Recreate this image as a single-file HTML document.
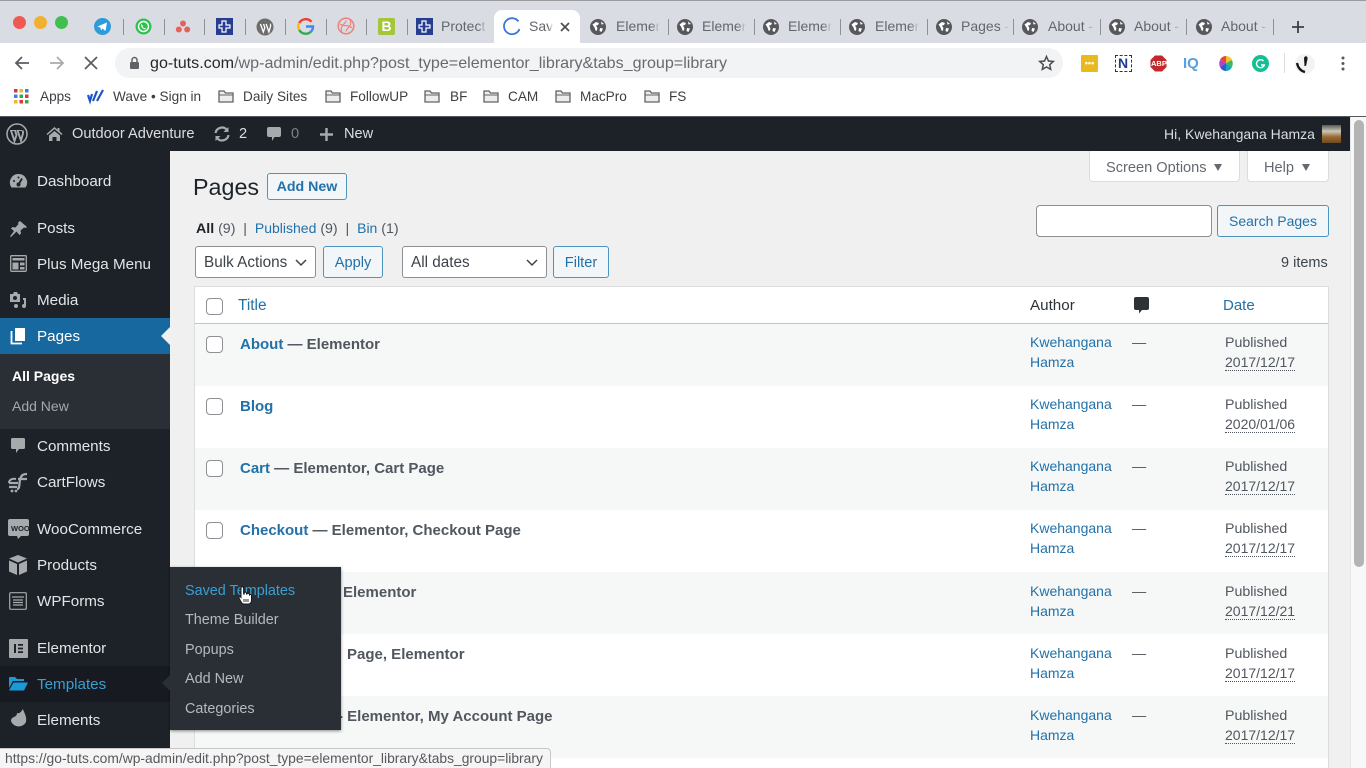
<!DOCTYPE html>
<html><head><meta charset="utf-8"><title>Pages</title>
<style>
*{box-sizing:border-box}
html,body{margin:0;padding:0;width:1366px;height:768px;overflow:hidden;background:#f0f0f1}
body{font-family:"Liberation Sans",sans-serif;position:relative}
#w{position:absolute;left:0;top:0;width:1366px;height:768px;overflow:hidden;filter:blur(.35px)}
.b{position:absolute}
.t{position:absolute;white-space:nowrap;line-height:24px;font-size:14.2px}
svg{position:absolute;overflow:visible}
.tab{color:#63676c;font-size:14px;line-height:20px;overflow:hidden;-webkit-mask-image:linear-gradient(90deg,#000 80%,transparent);mask-image:linear-gradient(90deg,#000 80%,transparent)}
.sep{position:absolute;top:19px;width:1px;height:16px;background:#8d9096}
.bm{color:#3c4043;font-size:13.6px;line-height:20px}
.ab{color:#dcdde0;font-size:14.6px;line-height:20px}
.m{color:#e2e4e6;font-size:15.2px}
.l{color:#2271a8;font-size:14px}
.t.l{margin-top:-1px}
.cb{position:absolute;left:206px;width:17px;height:17px;border:1px solid #8c8f94;border-radius:4px;background:#fff}
.t.h{color:#50575e;font-weight:bold;font-size:15px;line-height:26px}
.h a,.l2{color:#2271a8}
.g{color:#50575e}
.t.d{color:#50575e;border-bottom:1px dotted #50575e;line-height:15px;height:16px;margin-top:4px;font-size:14px}
.btn{position:absolute;border:1px solid #4f94bd;border-radius:3px;background:#f2f6f9;color:#2271a8;text-align:center;font-size:14.6px}
.sel{position:absolute;border:1px solid #8c8f94;border-radius:3px;background:#fff;color:#3c434a;font-size:15.3px;line-height:32px;padding-left:8px}
.fo{color:#b4b9be;font-size:14.4px}
</style></head><body><div id="w">

<!-- chrome -->
<div class="b" style="left:0;top:0;width:1366px;height:43px;background:#dadce3"></div>
<div class="b" style="left:0;top:43px;width:1366px;height:74px;background:#fff"></div>
<div class="b" style="left:0;top:0;width:1366px;height:1px;background:#9a9a9f"></div>
<div class="b" style="left:13px;top:16px;width:13px;height:13px;border-radius:50%;background:#ee5a52"></div>
<div class="b" style="left:34px;top:16px;width:13px;height:13px;border-radius:50%;background:#f1b030"></div>
<div class="b" style="left:55px;top:16px;width:13px;height:13px;border-radius:50%;background:#3fc04e"></div>

<svg style="left:94px;top:18px" width="17" height="17" viewBox="0 0 17 17"><circle cx="8.5" cy="8.5" r="8.5" fill="#2d9cdb"/><path d="M3.5 8.5 13 4.5 11.5 13 8.5 10.5 7 12.5 6.5 9.8z" fill="#fff"/></svg>
<svg style="left:135px;top:18px" width="17" height="17" viewBox="0 0 17 17"><circle cx="8.5" cy="8.5" r="8" fill="#2fc24f"/><circle cx="8.5" cy="8.5" r="5" fill="none" stroke="#fff" stroke-width="1.4"/><path d="M6.3 5.8 8 8l-.4 1 1.5 1.2 1-.3 1 1.1c-2 1.4-5.8-1.6-4.8-5.2z" fill="#fff"/></svg>
<svg style="left:175px;top:19px" width="16" height="15" viewBox="0 0 16 15"><circle cx="8" cy="4.5" r="3" fill="#e8605a"/><circle cx="3.8" cy="10.5" r="3" fill="#e8605a"/><circle cx="12.2" cy="10.5" r="3" fill="#e8605a"/></svg>
<div class="b" style="left:216px;top:18px;width:17px;height:17px;background:#263d91"></div>
<svg style="left:216px;top:18px" width="17" height="17" viewBox="0 0 17 17"><path d="M6 3h4v4h4v3h-4v4H6v-4H3V7h3z" fill="none" stroke="#fff" stroke-width="1.2"/></svg>
<svg style="left:256px;top:18px" width="18" height="18" viewBox="0 0 18 18"><circle cx="9" cy="9" r="8.5" fill="#6d6d6d"/><path d="M4.5 6 7.3 14l1.5-4.4L7.6 6m2.6 0 2.7 8 1.6-5.5c.4-1.5-.3-2.5-.5-2.5" fill="none" stroke="#fff" stroke-width="1.3"/></svg>
<svg style="left:297px;top:18px" width="17" height="17" viewBox="0 0 17 17"><path d="M14.5 3.8A7.5 7.5 0 0 0 2.2 5" fill="none" stroke="#ea4335" stroke-width="2.4"/><path d="M2.2 5a7.5 7.5 0 0 0 0 7" fill="none" stroke="#fbbc05" stroke-width="2.4"/><path d="M2.2 12a7.5 7.5 0 0 0 11.6 1.7" fill="none" stroke="#34a853" stroke-width="2.4"/><path d="M13.8 13.7A7 7 0 0 0 16 8.5H9" fill="none" stroke="#4285f4" stroke-width="2.4"/></svg>
<svg style="left:337px;top:17px" width="18" height="18" viewBox="0 0 18 18" fill="none" stroke="#ef7f79" stroke-width="1.5"><circle cx="9" cy="9" r="7.8"/><path d="M5 14.500C2 9 9 7 9 3.500M13 3.500C16 9 9 11 9 14.500M3 7c4 3 8 0 12 4" stroke-width="1.100"/></svg>
<div class="b" style="left:378px;top:18px;width:17px;height:17px;background:#a4c739;border-radius:2px;color:#fff;font:bold 14px/17px 'Liberation Sans',sans-serif;text-align:center">B</div>
<div class="b" style="left:416px;top:18px;width:17px;height:17px;background:#263d91"></div>
<svg style="left:416px;top:18px" width="17" height="17" viewBox="0 0 17 17"><path d="M6 3h4v4h4v3h-4v4H6v-4H3V7h3z" fill="none" stroke="#fff" stroke-width="1.2"/></svg>
<div class="sep" style="left:123px"></div><div class="sep" style="left:164px"></div><div class="sep" style="left:204px"></div><div class="sep" style="left:245px"></div><div class="sep" style="left:285px"></div><div class="sep" style="left:326px"></div><div class="sep" style="left:366px"></div><div class="sep" style="left:407px"></div>
<div class="t tab" style="left:441px;top:16px;width:46px">Protect</div>

<div class="b" style="left:494px;top:10px;width:86px;height:34px;background:#fff;border-radius:8px 8px 0 0"></div>
<svg style="left:503px;top:18px" width="18" height="18" viewBox="0 0 18 18"><path d="M15.5 3.5A8 8 0 1 0 16.5 11" fill="none" stroke="#3b78d8" stroke-width="1.8"/></svg>
<div class="t tab" style="left:529px;top:16px;width:24px">Sav</div>
<svg style="left:560px;top:22px" width="10" height="10" viewBox="0 0 10 10"><path d="M1 1 9 9M9 1 1 9" stroke="#4b4e52" stroke-width="1.7"/></svg>

<svg width="0" height="0"><defs><g id="gl"><circle cx="8" cy="8" r="8" fill="#56585c"/><path d="M2.5 5.5 6 3l3 1-1 2-2 .5 1.5 3-1 2.5-1-.5-1-3zM10 9l3 .5L11.5 13 9.500 12z M11 2.500 14 5l-2.500.5z" fill="#fff"/></g></defs></svg>
<svg style="left:590px;top:19px" width="16" height="16"><use href="#gl"/></svg><div class="t tab" style="left:616px;top:16px;width:44px">Elemen</div><div class="sep" style="left:668px"></div>
<svg style="left:677px;top:19px" width="16" height="16"><use href="#gl"/></svg><div class="t tab" style="left:702px;top:16px;width:44px">Elemen</div><div class="sep" style="left:754px"></div>
<svg style="left:763px;top:19px" width="16" height="16"><use href="#gl"/></svg><div class="t tab" style="left:788px;top:16px;width:44px">Elemen</div><div class="sep" style="left:840px"></div>
<svg style="left:849px;top:19px" width="16" height="16"><use href="#gl"/></svg><div class="t tab" style="left:875px;top:16px;width:44px">Elemen</div><div class="sep" style="left:927px"></div>
<svg style="left:936px;top:19px" width="16" height="16"><use href="#gl"/></svg><div class="t tab" style="left:961px;top:16px;width:48px">Pages -</div><div class="sep" style="left:1013px"></div>
<svg style="left:1022px;top:19px" width="16" height="16"><use href="#gl"/></svg><div class="t tab" style="left:1048px;top:16px;width:46px">About -</div><div class="sep" style="left:1100px"></div>
<svg style="left:1109px;top:19px" width="16" height="16"><use href="#gl"/></svg><div class="t tab" style="left:1134px;top:16px;width:46px">About -</div><div class="sep" style="left:1186px"></div>
<svg style="left:1196px;top:19px" width="16" height="16"><use href="#gl"/></svg><div class="t tab" style="left:1221px;top:16px;width:46px">About -</div><div class="sep" style="left:1273px"></div>
<svg style="left:1291px;top:20px" width="14" height="14" viewBox="0 0 14 14"><path d="M7 1v12M1 7h12" stroke="#3c4043" stroke-width="1.8"/></svg>

<svg style="left:14px;top:55px" width="16" height="16" viewBox="0 0 16 16"><path d="M15 8H2M8 2 2 8l6 6" fill="none" stroke="#5a5e63" stroke-width="1.8"/></svg>
<svg style="left:49px;top:55px" width="16" height="16" viewBox="0 0 16 16"><path d="M1 8h13M8 2l6 6-6 6" fill="none" stroke="#a8abaf" stroke-width="1.8"/></svg>
<svg style="left:84px;top:56px" width="14" height="14" viewBox="0 0 14 14"><path d="M1 1 13 13M13 1 1 13" stroke="#5a5e63" stroke-width="1.8"/></svg>
<div class="b" style="left:115px;top:48px;width:948px;height:30px;border-radius:15px;background:#f1f3f4"></div>
<svg style="left:129px;top:56px" width="11" height="14" viewBox="0 0 11 14"><path d="M3 6V4a2.500 2.500 0 0 1 5 0v2" fill="none" stroke="#5f6368" stroke-width="1.500"/><rect x="1" y="6" width="9" height="7" rx="1" fill="#5f6368"/></svg>
<div class="t" style="left:150px;top:51px;font-size:16.1px;color:#676b70"><span style="color:#26282b">go-tuts.com</span>/wp-admin/edit.php?post_type=elementor_library&amp;tabs_group=library</div>
<svg style="left:1038px;top:55px" width="17" height="16" viewBox="0 0 17 16"><path d="M8.500 1.500 10.500 6l4.800.5-3.600 3.200 1 4.700-4.200-2.400-4.200 2.400 1-4.700L1.700 6.500 6.500 6z" fill="none" stroke="#4a4d51" stroke-width="1.500"/></svg>

<div class="b" style="left:1081px;top:55px;width:17px;height:17px;background:#eab81f;border-radius:1px;color:#fff;font:bold 9px/17px 'Liberation Sans',sans-serif;text-align:center">•••</div>
<div class="b" style="left:1115px;top:55px;width:17px;height:17px;border:1px dashed #30343a"></div>
<div class="t" style="left:1118px;top:53px;font-weight:bold;color:#1d3c8f;font-size:14px;line-height:20px">N</div>
<svg style="left:1150px;top:55px" width="17" height="17" viewBox="0 0 17 17"><path d="M5 0.500h7L16.500 5v7L12 16.500H5L.5 12V5z" fill="#c3282d"/></svg>
<div class="t" style="left:1151px;top:54px;color:#fff;font:bold 7.500px/19px 'Liberation Sans',sans-serif;width:15px;text-align:center">ABP</div>
<div class="t" style="left:1183px;top:52px;color:#5aa0dc;font-weight:bold;font-size:15px">IQ</div>
<svg style="left:1218px;top:55px" width="16" height="17" viewBox="0 0 16 17"><path d="M8 1 8 8 2 5Q4 1 8 1z" fill="#e94335"/><path d="M8 1Q12 1 14 5L8 8z" fill="#f6c030"/><path d="M14 5Q15.500 8.500 14 12L8 8z" fill="#3fb950"/><path d="M14 12Q12 16 8 16L8 8z" fill="#19a7b3"/><path d="M8 16Q4 16 2 12L8 8z" fill="#3558d0"/><path d="M2 12Q.5 8.500 2 5L8 8z" fill="#b13fcf"/></svg>
<svg style="left:1252px;top:55px" width="17" height="17" viewBox="0 0 17 17"><circle cx="8.500" cy="8.500" r="8.500" fill="#15bf92"/><path d="M11.500 6A4 4 0 1 0 12.300 10H9" fill="none" stroke="#fff" stroke-width="1.400"/></svg>
<div class="b" style="left:1284px;top:53px;width:1px;height:20px;background:#dadce0"></div>
<svg style="left:1295px;top:53px" width="20" height="22" viewBox="0 0 20 22"><circle cx="10" cy="11" r="10" fill="#f3f3f3"/><path d="M2 10C3 15 6 18 10 19" fill="none" stroke="#17181a" stroke-width="2.300"/><path d="M9 5c1-3 4-2 3.500 1L11 13 9.500 13z" fill="#17181a"/></svg>
<svg style="left:1341px;top:56px" width="4" height="15" viewBox="0 0 4 15" fill="#55585c"><circle cx="2" cy="2" r="1.500"/><circle cx="2" cy="7.500" r="1.500"/><circle cx="2" cy="13" r="1.500"/></svg>

<svg style="left:14px;top:89px" width="15" height="15" viewBox="0 0 15 15"><g fill="#d93a30"><rect x="0" y="0" width="3.500" height="3.500"/></g><rect x="5.500" width="3.500" height="3.500" fill="#f2b530"/><rect x="11" width="3.500" height="3.500" fill="#3d7fe0"/><rect y="5.500" width="3.500" height="3.500" fill="#3d7fe0"/><rect x="5.500" y="5.500" width="3.500" height="3.500" fill="#35a853"/><rect x="11" y="5.500" width="3.500" height="3.500" fill="#d93a30"/><rect y="11" width="3.500" height="3.500" fill="#f2b530"/><rect x="5.500" y="11" width="3.500" height="3.500" fill="#d93a30"/><rect x="11" y="11" width="3.500" height="3.500" fill="#35a853"/></svg>
<div class="t bm" style="left:40px;top:87px">Apps</div>
<svg style="left:87px;top:89px" width="17" height="15" viewBox="0 0 17 15"><path d="M1 6 3 12 5 5M6 12 10 2M10 12 16 1" fill="none" stroke="#1c55c9" stroke-width="2.200"/></svg>
<div class="t bm" style="left:113px;top:87px">Wave • Sign in</div>
<svg width="0" height="0"><defs><g id="fo"><path d="M1 13V2h5l1.500 2H15v9z" fill="#ededed" stroke="#5f6368" stroke-width="1.300"/><path d="M1 6h14" stroke="#5f6368" stroke-width="1"/></g></defs></svg>
<svg style="left:218px;top:89px" width="16" height="14"><use href="#fo"/></svg><div class="t bm" style="left:243px;top:87px">Daily Sites</div>
<svg style="left:325px;top:89px" width="16" height="14"><use href="#fo"/></svg><div class="t bm" style="left:350px;top:87px">FollowUP</div>
<svg style="left:424px;top:89px" width="16" height="14"><use href="#fo"/></svg><div class="t bm" style="left:450px;top:87px">BF</div>
<svg style="left:483px;top:89px" width="16" height="14"><use href="#fo"/></svg><div class="t bm" style="left:508px;top:87px">CAM</div>
<svg style="left:555px;top:89px" width="16" height="14"><use href="#fo"/></svg><div class="t bm" style="left:580px;top:87px">MacPro</div>
<svg style="left:644px;top:89px" width="16" height="14"><use href="#fo"/></svg><div class="t bm" style="left:669px;top:87px">FS</div>

<!-- admin bar -->
<div class="b" style="left:0;top:116px;width:1350px;height:35px;background:#1d2229"></div>
<div class="b" style="left:0;top:116px;width:1366px;height:1px;background:#55585c"></div>
<svg style="left:6px;top:123px" width="22" height="22" viewBox="0 0 22 22"><circle cx="11" cy="11" r="10" fill="none" stroke="#a7aaad" stroke-width="1.500"/><path d="M5 7.500 8.500 18l2-6L9 7.500M11.500 7.500 15 17.500l2-7c.4-1.500-.2-2.500-.5-3" fill="none" stroke="#a7aaad" stroke-width="1.900"/><path d="M4 7.500h6.500M11 7.500h5" stroke="#a7aaad" stroke-width="1"/></svg>
<svg style="left:46px;top:126px" width="17" height="16" viewBox="0 0 17 16"><path d="M8.500 1 .5 8l1 1 7-6 7 6 1-1-3-2.700V2h-2v1.600z" fill="#a7aaad"/><path d="M3 9.500 8.500 5 14 9.500V15h-3.500v-4h-4v4H3z" fill="#a7aaad"/></svg>
<div class="t ab" style="left:72px;top:124px">Outdoor Adventure</div>
<svg style="left:213px;top:126px" width="18" height="16" viewBox="0 0 18 16"><path d="M2.500 7a6.500 6.500 0 0 1 11.500-3M15.500 9A6.500 6.500 0 0 1 4 12" fill="none" stroke="#a7aaad" stroke-width="2.200"/><path d="M15.500 1v5h-5zM2.500 15v-5h5z" fill="#a7aaad"/></svg>
<div class="t ab" style="left:239px;top:124px">2</div>
<svg style="left:266px;top:126px" width="16" height="17" viewBox="0 0 16 17"><path d="M3 1h10a2 2 0 0 1 2 2v6a2 2 0 0 1-2 2H8.500L6 15v-4H3a2 2 0 0 1-2-2V3a2 2 0 0 1 2-2z" fill="#a7aaad"/></svg>
<div class="t ab" style="left:291px;top:124px;color:#7d8186">0</div>
<svg style="left:319px;top:127px" width="15" height="15" viewBox="0 0 15 15"><path d="M7.500 1v13M1 7.500h13" stroke="#a7aaad" stroke-width="2.400"/></svg>
<div class="t ab" style="left:344px;top:124px">New</div>
<div class="t ab" style="left:1164px;top:124px;font-size:14px">Hi, Kwehangana Hamza</div>
<div class="b" style="left:1322px;top:125px;width:19px;height:18px;background:linear-gradient(180deg,#5a5a52 0,#c9c8ba 35%,#9e6b32 65%,#6e4a22 100%)"></div>

<!-- sidebar -->
<div class="b" style="left:0;top:151px;width:170px;height:617px;background:#1d2229"></div>
<div class="b" style="left:0;top:318px;width:170px;height:36px;background:#16689f"></div>
<div class="b" style="left:0;top:354px;width:170px;height:75px;background:#2a2f36"></div>
<div class="b" style="left:161px;top:327px;width:0;height:0;border:9px solid transparent;border-right-color:#f0f0f1;border-left:0"></div>
<div class="b" style="left:0;top:666px;width:170px;height:36px;background:#171b21"></div>

<svg style="left:9px;top:172px" width="19" height="18" viewBox="0 0 19 18"><path d="M9.500 2a8.500 8.500 0 0 0-7 13.500h14A8.500 8.500 0 0 0 9.500 2z" fill="#a7aaad"/><path d="M9.500 12.500 13 6.500" stroke="#1d2229" stroke-width="1.800"/><circle cx="9.500" cy="12.500" r="2" fill="#1d2229"/><circle cx="5" cy="9" r="1" fill="#1d2229"/><circle cx="9.500" cy="5.500" r="1" fill="#1d2229"/></svg>
<div class="t m" style="left:37px;top:170px">Dashboard</div>
<svg style="left:9px;top:220px" width="19" height="18" viewBox="0 0 19 18"><path d="M11 1l7 6-1.500 1-1.500-.5-3.500 3 .5 3-1.500 1.500-3-3.500L2 17l-1-.5 4-5.500-3-2.500L3.500 7l3 .5 3-3.500-.5-1.500z" fill="#a7aaad"/></svg>
<div class="t m" style="left:37px;top:217px">Posts</div>
<svg style="left:10px;top:255px" width="17" height="17" viewBox="0 0 17 17"><rect x=".7" y=".7" width="15.600" height="15.600" rx="1" fill="none" stroke="#a7aaad" stroke-width="1.300"/><path d="M2.500 3h12v2.500h-12zM2.500 7.500h6v7h-6zM10 7.500h4.500v3H10zM10 12h4.500v2.500H10z" fill="#a7aaad"/></svg>
<div class="t m" style="left:37px;top:253px">Plus Mega Menu</div>
<svg style="left:9px;top:291px" width="19" height="19" viewBox="0 0 19 19"><path d="M1 3h3l1-2h3l1 2h2v8H1z" fill="#a7aaad"/><circle cx="6" cy="7" r="2" fill="#1d2229"/><path d="M14 7h3v8a2 2 0 1 1-2-2V9h-1z" fill="#a7aaad"/><circle cx="7" cy="15" r="2" fill="#a7aaad"/></svg>
<div class="t m" style="left:37px;top:289px">Media</div>
<svg style="left:10px;top:327px" width="16" height="18" viewBox="0 0 16 18"><path d="M5 1h10v13H5z" fill="#fff"/><path d="M1.500 4v12.500H12" fill="none" stroke="#fff" stroke-width="1.800"/></svg>
<div class="t m" style="left:37px;top:325px;color:#fff">Pages</div>
<div class="t" style="left:12px;top:364px;color:#fff;font-weight:bold;font-size:14px">All Pages</div>
<div class="t" style="left:12px;top:394px;color:#a4a8ad;font-size:14px">Add New</div>
<svg style="left:10px;top:437px" width="16" height="18" viewBox="0 0 16 18"><path d="M2.500 1h11A1.500 1.500 0 0 1 15 2.500v8a1.500 1.500 0 0 1-1.500 1.500H9l-3 4v-4H2.500A1.500 1.500 0 0 1 1 10.500v-8A1.500 1.500 0 0 1 2.500 1z" fill="#a7aaad"/></svg>
<div class="t m" style="left:37px;top:435px">Comments</div>
<svg style="left:8px;top:472px" width="21" height="21" viewBox="0 0 21 21"><path d="M1 11h9M1 15h8M9 17c3 0 2-5 3-9s2-6 7-6M10 7h9" fill="none" stroke="#a7aaad" stroke-width="2.300"/><path d="M1 11c0-3 3-5 7-4" fill="none" stroke="#a7aaad" stroke-width="2"/><circle cx="4" cy="19" r="1.400" fill="#a7aaad"/><circle cx="8" cy="19" r="1.400" fill="#a7aaad"/></svg>
<div class="t m" style="left:37px;top:471px">CartFlows</div>
<svg style="left:8px;top:519px" width="21" height="21" viewBox="0 0 21 21"><path d="M2 0h17a2 2 0 0 1 2 2v13a2 2 0 0 1-2 2h-6l-3 3-1-3H2a2 2 0 0 1-2-2V2a2 2 0 0 1 2-2z" fill="#a7aaad"/></svg>
<div class="t" style="left:11px;top:517px;color:#1d2229;font-size:7.500px;font-weight:bold">WOO</div>
<div class="t m" style="left:37px;top:518px">WooCommerce</div>
<svg style="left:8px;top:555px" width="20" height="21" viewBox="0 0 20 21"><path d="M10 0 19 3.500 10 7.500 1 3.500zM1 5.500l8 3.500v11l-8-3.500zM19 5.500 11 9v11l8-3.500z" fill="#a7aaad"/></svg>
<div class="t m" style="left:37px;top:554px">Products</div>
<svg style="left:9px;top:592px" width="18" height="18" viewBox="0 0 18 18"><rect x=".7" y=".7" width="16.600" height="16.600" rx="1" fill="none" stroke="#a7aaad" stroke-width="1.200"/><path d="M3 5h12M4 8h10M4 10.500h10M4 13h10" stroke="#a7aaad" stroke-width="1.300"/></svg>
<div class="t m" style="left:37px;top:590px">WPForms</div>
<div class="b" style="left:9px;top:639px;width:19px;height:19px;background:#a7aaad;border-radius:1px"></div>
<svg style="left:9px;top:639px" width="19" height="19" viewBox="0 0 19 19"><path d="M5 5h2v9H5zM9 5h5v1.800H9zM9 8.600h5v1.800H9zM9 12.200h5V14H9z" fill="#1d2229"/></svg>
<div class="t m" style="left:37px;top:637px">Elementor</div>
<svg style="left:9px;top:676px" width="19" height="15" viewBox="0 0 19 15"><path d="M0 2a1 1 0 0 1 1-1h5l2 2h7v2H4L0 12z" fill="#1c9ad6"/><path d="M4.500 6.500H19L15 14.500H0z" fill="#1c9ad6"/></svg>
<div class="t m" style="left:37px;top:673px;color:#3a9fd1">Templates</div>
<svg style="left:10px;top:709px" width="17" height="20" viewBox="0 0 17 20"><path d="M13 0C14 4 17 7 16 13A8 7.500 0 0 1 1 12C1 7 7 9 7 4 9.500 5 11 3 13 0z" fill="#a7aaad"/></svg>
<div class="t m" style="left:37px;top:709px">Elements</div>

<!-- content -->
<div class="b" style="left:1089px;top:151px;width:151px;height:31px;background:#fff;border:1px solid #dcdcde;border-top:0;border-radius:0 0 4px 4px"></div>
<div class="t" style="left:1106px;top:156px;color:#646970;font-size:14.6px">Screen Options</div>
<div class="b" style="left:1214px;top:164px;width:0;height:0;border:4.500px solid transparent;border-top:7px solid #646970;border-bottom:0"></div>
<div class="b" style="left:1247px;top:151px;width:82px;height:31px;background:#fff;border:1px solid #dcdcde;border-top:0;border-radius:0 0 4px 4px"></div>
<div class="t" style="left:1264px;top:156px;color:#646970;font-size:14.6px">Help</div>
<div class="b" style="left:1302px;top:164px;width:0;height:0;border:4.500px solid transparent;border-top:7px solid #646970;border-bottom:0"></div>

<div class="t" style="left:193px;top:173px;font-size:23.300px;line-height:28px;color:#1d2327">Pages</div>
<div class="btn" style="left:267px;top:173px;width:80px;height:27px;line-height:26px;font-weight:bold;font-size:14.200px">Add New</div>
<div class="t" style="left:196px;top:216px;color:#50575e;font-size:14.200px"><b style="color:#1d2327">All</b> (9) &nbsp;| &nbsp;<span class="l">Published</span> (9) &nbsp;| &nbsp;<span class="l">Bin</span> (1)</div>

<div class="sel" style="left:195px;top:246px;width:121px;height:32px">Bulk Actions</div>
<svg style="left:295px;top:259px" width="12" height="8" viewBox="0 0 12 8"><path d="M1 1l5 5 5-5" fill="none" stroke="#3c434a" stroke-width="1.500"/></svg>
<div class="btn" style="left:323px;top:246px;width:60px;height:32px;line-height:33px">Apply</div>
<div class="sel" style="left:402px;top:246px;width:145px;height:32px">All dates</div>
<svg style="left:526px;top:259px" width="12" height="8" viewBox="0 0 12 8"><path d="M1 1l5 5 5-5" fill="none" stroke="#3c434a" stroke-width="1.500"/></svg>
<div class="btn" style="left:553px;top:246px;width:56px;height:32px;line-height:33px">Filter</div>

<div class="b" style="left:1036px;top:205px;width:176px;height:32px;background:#fff;border:1px solid #8c8f94;border-radius:4px"></div>
<div class="btn" style="left:1217px;top:205px;width:112px;height:32px;line-height:31px;font-size:14px">Search Pages</div>
<div class="t" style="left:1281px;top:251px;color:#3c434a;font-size:14.500px">9 items</div>

<!-- table -->
<div class="b" style="left:194px;top:286px;width:1135px;height:482px;background:#fff;border:1px solid #dcdcde;border-bottom:0"></div>
<div class="b" style="left:195px;top:323px;width:1133px;height:1px;background:#c3c4c7"></div>
<div class="b" style="left:195px;top:324px;width:1133px;height:62px;background:#f6f7f7"></div>
<div class="b" style="left:195px;top:448px;width:1133px;height:62px;background:#f6f7f7"></div>
<div class="b" style="left:195px;top:572px;width:1133px;height:62px;background:#f6f7f7"></div>
<div class="b" style="left:195px;top:696px;width:1133px;height:62px;background:#f6f7f7"></div>

<div class="cb" style="top:298px"></div>
<div class="t l" style="left:238px;top:295px;font-size:15.400px">Title</div>
<div class="t" style="left:1030px;top:294px;color:#2c3338;font-size:15.200px">Author</div>
<svg style="left:1134px;top:297px" width="15" height="17" viewBox="0 0 15 17"><path d="M2 0h11a2 2 0 0 1 2 2v9a2 2 0 0 1-2 2H8l-3 3.500V13H2a2 2 0 0 1-2-2V2a2 2 0 0 1 2-2z" fill="#2c3338"/></svg>
<div class="t l" style="left:1223px;top:295px;font-size:15px">Date</div>

<div class="cb" style="top:336px"></div><div class="t h" style="left:240px;top:332px"><a>About</a> — Elementor</div>
<div class="cb" style="top:398px"></div><div class="t h" style="left:240px;top:394px"><a>Blog</a></div>
<div class="cb" style="top:460px"></div><div class="t h" style="left:240px;top:456px"><a>Cart</a> — Elementor, Cart Page</div>
<div class="cb" style="top:522px"></div><div class="t h" style="left:240px;top:518px"><a>Checkout</a> — Elementor, Checkout Page</div>
<div class="t h" style="left:343px;top:580px">Elementor</div>
<div class="t h" style="left:347px;top:642px">Page, Elementor</div>
<div class="t h" style="left:338px;top:704px">- Elementor, My Account Page</div>

<div class="t l" style="left:1030px;top:331px">Kwehangana</div><div class="t l" style="left:1030px;top:351px">Hamza</div><div class="t g" style="left:1132px;top:331px">—</div><div class="t g" style="left:1225px;top:331px">Published</div><div class="t d" style="left:1225px;top:351px">2017/12/17</div>
<div class="t l" style="left:1030px;top:393px">Kwehangana</div><div class="t l" style="left:1030px;top:413px">Hamza</div><div class="t g" style="left:1132px;top:393px">—</div><div class="t g" style="left:1225px;top:393px">Published</div><div class="t d" style="left:1225px;top:413px">2020/01/06</div>
<div class="t l" style="left:1030px;top:455px">Kwehangana</div><div class="t l" style="left:1030px;top:475px">Hamza</div><div class="t g" style="left:1132px;top:455px">—</div><div class="t g" style="left:1225px;top:455px">Published</div><div class="t d" style="left:1225px;top:475px">2017/12/17</div>
<div class="t l" style="left:1030px;top:517px">Kwehangana</div><div class="t l" style="left:1030px;top:537px">Hamza</div><div class="t g" style="left:1132px;top:517px">—</div><div class="t g" style="left:1225px;top:517px">Published</div><div class="t d" style="left:1225px;top:537px">2017/12/17</div>
<div class="t l" style="left:1030px;top:580px">Kwehangana</div><div class="t l" style="left:1030px;top:600px">Hamza</div><div class="t g" style="left:1132px;top:580px">—</div><div class="t g" style="left:1225px;top:580px">Published</div><div class="t d" style="left:1225px;top:600px">2017/12/21</div>
<div class="t l" style="left:1030px;top:642px">Kwehangana</div><div class="t l" style="left:1030px;top:662px">Hamza</div><div class="t g" style="left:1132px;top:642px">—</div><div class="t g" style="left:1225px;top:642px">Published</div><div class="t d" style="left:1225px;top:662px">2017/12/17</div>
<div class="t l" style="left:1030px;top:704px">Kwehangana</div><div class="t l" style="left:1030px;top:724px">Hamza</div><div class="t g" style="left:1132px;top:704px">—</div><div class="t g" style="left:1225px;top:704px">Published</div><div class="t d" style="left:1225px;top:724px">2017/12/17</div>

<!-- flyout -->
<div class="b" style="left:170px;top:567px;width:171px;height:163px;background:#2a2f36;box-shadow:0 1px 3px rgba(0,0,0,.45)"></div>
<div class="b" style="left:162px;top:675px;width:0;height:0;border:8px solid transparent;border-right-color:#2a2f36;border-left:0"></div>
<div class="t fo" style="left:185px;top:579px;color:#3a9fd1">Saved Templates</div>
<div class="t fo" style="left:185px;top:608px">Theme Builder</div>
<div class="t fo" style="left:185px;top:638px">Popups</div>
<div class="t fo" style="left:185px;top:667px">Add New</div>
<div class="t fo" style="left:185px;top:697px">Categories</div>
<svg style="left:238px;top:586px" width="14" height="19" viewBox="0 0 14 19"><path d="M3 2a1.300 1.300 0 0 1 2.600 0v6h.6V7a1.200 1.200 0 0 1 2.300 0v1h.5a1.200 1.200 0 0 1 2.300.2l.2.8a1.100 1.100 0 0 1 2 .5V14c0 2-1 4-3 4H6c-2 0-3-2-5-6-.5-1 .8-2 2-.5z" fill="#fff" stroke="#17181a" stroke-width="1"/><path d="M6 13v3M8 13v3M10 13v3" stroke="#17181a" stroke-width=".9"/></svg>

<!-- scrollbar -->
<div class="b" style="left:1350px;top:117px;width:16px;height:651px;background:#f8f8f8;border-left:1px solid #e6e6e6"></div>
<div class="b" style="left:1354px;top:120px;width:10px;height:447px;border-radius:5px;background:#b4b4b4"></div>

<!-- status bubble -->
<div class="b" style="left:0;top:748px;width:551px;height:20px;background:#f5f5f5;border:1px solid #c8c8c8;border-left:0;border-bottom:0;border-radius:0 4px 0 0"></div>
<div class="t" style="left:5px;top:746px;font-size:13.850px;color:#55585c">https://go-tuts.com/wp-admin/edit.php?post_type=elementor_library&amp;tabs_group=library</div>

</div></body></html>
